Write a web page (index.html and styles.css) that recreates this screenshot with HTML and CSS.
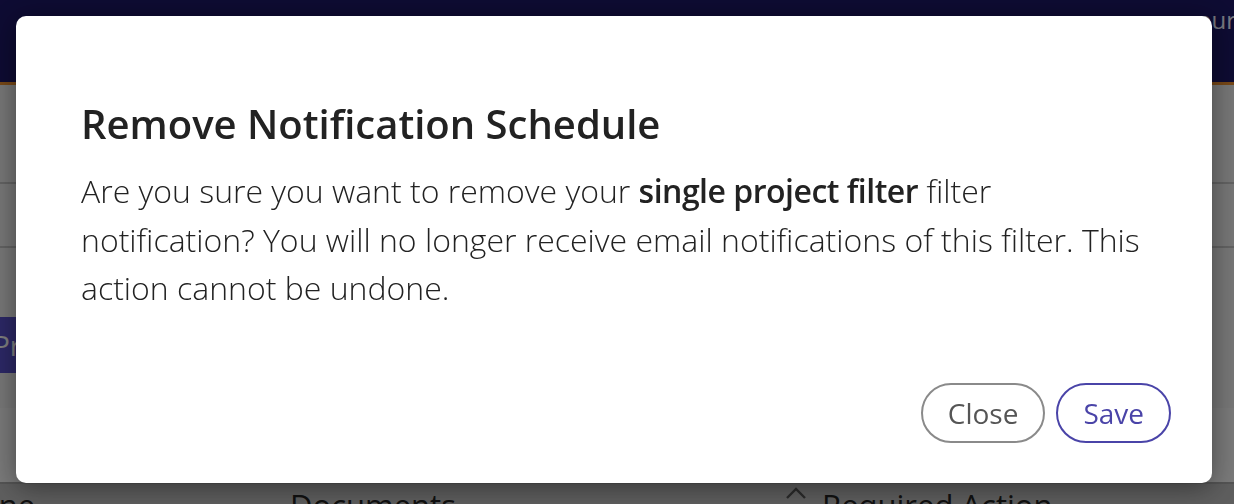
FILE: index.html
```html
<!DOCTYPE html>
<html lang="en">
<head>
<meta charset="utf-8">
<title>Remove Notification Schedule</title>
<link rel="stylesheet" href="styles.css">
</head>
<body>
<div class="page">
  <header class="topbar">
    <nav class="topnav"><span class="navlink">your</span></nav>
  </header>
  <section class="filters">
    <div class="filter-row first"></div>
    <div class="filter-row second"></div>
    <div class="actions-row">
      <button class="primary-btn">Projects</button>
    </div>
    <div class="spacer-row"></div>
  </section>
  <div class="table-head">
    <span class="col col-name">Timeline</span>
    <span class="col col-docs">Documents</span>
    <span class="col col-req">
      <svg class="caret" width="22" height="14" viewBox="0 0 22 14" aria-hidden="true"><path d="M2 12 L11 3 L20 12" fill="none" stroke="#555" stroke-width="2.4"/></svg>
      Required Action
    </span>
  </div>
</div>

<div class="backdrop"></div>
<div class="modal" role="dialog" aria-labelledby="modal-title">
  <h2 class="modal-title" id="modal-title">Remove Notification Schedule</h2>
  <p class="modal-text">Are you sure you want to remove your <strong>single project filter</strong> filter notification? You will no longer receive email notifications of this filter. This action cannot be undone.</p>
  <div class="modal-footer">
    <button class="btn btn-close">Close</button>
    <button class="btn btn-save">Save</button>
  </div>
</div>
</body>
</html>
```

FILE: styles.css
```css
* { box-sizing: border-box; }

html, body {
  margin: 0;
  padding: 0;
  height: 100%;
  overflow: hidden;
}

body {
  font-family: "Open Sans", "Liberation Sans", sans-serif;
  background: #ececec;
  color: #222;
}

.page {
  display: flex;
  flex-direction: column;
  min-height: 100%;
}

.topbar {
  height: 85px;
  background: #1c1766;
  border-bottom: 3px solid #f0902e;
  display: flex;
  justify-content: flex-end;
}

.topnav {
  padding-top: 3px;
  margin-right: -2px;
}

.navlink {
  color: #f0f0ff;
  font-size: 24px;
  font-weight: 400;
}

.filters {
  background: #efefef;
  display: flex;
  flex-direction: column;
}

.filter-row.first {
  height: 99px;
  border-bottom: 2px solid #c6c6c6;
}

.filter-row.second {
  height: 64px;
  border-bottom: 2px solid #c6c6c6;
}

.actions-row {
  height: 160px;
  padding-top: 69px;
}

.primary-btn {
  font-family: inherit;
  font-size: 28px;
  color: #fff;
  background: #5850cc;
  border: none;
  height: 56px;
  padding: 0 16px;
  margin-left: -23px;
}

.spacer-row {
  height: 74px;
  background: #f5f5f5;
}

.table-head {
  flex: 1;
  background: #bdbdbd;
  border-top: 2px solid #a8a8a8;
  display: flex;
  font-size: 31px;
  color: #222;
  padding-top: 0;
  line-height: 42px;
  white-space: nowrap;
}

.col-name { flex: 0 0 378px; margin-left: -88px; }
.col-docs { flex: 0 0 495px; }
.col-req { display: flex; align-items: flex-start; gap: 15px; }
.caret { margin-top: 2px; }

.backdrop {
  position: fixed;
  inset: 0;
  background: rgba(0, 0, 0, 0.5);
}

.modal {
  position: fixed;
  top: 16px;
  left: 16px;
  width: 1196px;
  height: 467px;
  background: #fff;
  border-radius: 10px;
  box-shadow: 0 4px 28px rgba(0, 0, 0, 0.45);
  padding: 80px 41px 40px 65px;
  display: flex;
  flex-direction: column;
}

.modal-title {
  margin: 0;
  font-size: 40px;
  font-weight: 600;
  line-height: 55px;
  color: #222;
}

.modal-text {
  margin: 16px 0 0;
  max-width: 1075px;
  font-size: 32px;
  font-weight: 300;
  line-height: 48.5px;
  color: #222;
}

.modal-text strong {
  font-weight: 600;
  letter-spacing: -0.5px;
}

.modal-footer {
  margin-top: auto;
  display: flex;
  justify-content: flex-end;
  gap: 11px;
}

.btn {
  font-family: inherit;
  font-size: 28px;
  font-weight: 400;
  height: 60px;
  padding: 0 25px;
  border-radius: 30px;
  background: #fff;
  cursor: pointer;
}

.btn-close {
  color: #555;
  border: 2px solid #8a8a8a;
}

.btn-save {
  color: #4a44a8;
  border: 2px solid #4a44a8;
}
```
